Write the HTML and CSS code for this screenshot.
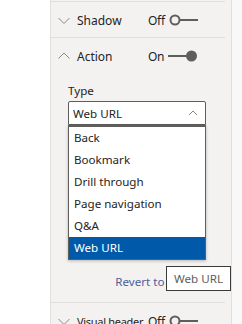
FILE: index.html
```html
<!DOCTYPE html>
<html>
	<head>
		<title>format pane</title>
		<meta charset="utf-8">
		<link rel="stylesheet" href="styles.css">
	</head>
	<body>
		<div class="page">
			<div class="gutter"></div>
			<div class="pane">
				<div class="card first">
					<div class="head">
						<svg class="chev" width="12" height="12" viewBox="0 0 12 12"><path d="M0.5 4 L6 9.5 L11.5 4" fill="none" stroke="#8a8886" stroke-width="1"/></svg>
						<span class="label">Shadow</span>
						<span class="state">Off</span>
						<svg class="toggle" width="32" height="14" viewBox="0 0 32 14"><circle cx="6" cy="7" r="4.5" fill="none" stroke="#605e5c" stroke-width="2"/><line x1="10.5" y1="7" x2="29" y2="7" stroke="#605e5c" stroke-width="2"/></svg>
					</div>
				</div>
				<div class="card">
					<div class="head">
						<svg class="chev" width="12" height="12" viewBox="0 0 12 12"><path d="M0.5 8.5 L6 3 L11.5 8.5" fill="none" stroke="#8a8886" stroke-width="1"/></svg>
						<span class="label">Action</span>
						<span class="state">On</span>
						<svg class="toggle on" width="32" height="14" viewBox="0 0 32 14"><line x1="0" y1="7" x2="20" y2="7" stroke="#605e5c" stroke-width="2"/><circle cx="23.5" cy="7" r="5.5" fill="#605e5c"/></svg>
					</div>
					<div class="body">
						<div class="field">Type</div>
						<div class="select">
							<span>Web URL</span>
							<svg width="10" height="6" viewBox="0 0 10 6"><path d="M1 5 L5 1 L9 5" fill="none" stroke="#8a8886" stroke-width="1"/></svg>
						</div>
						<ul class="list">
							<li>Back</li>
							<li>Bookmark</li>
							<li>Drill through</li>
							<li>Page navigation</li>
							<li>Q&amp;A</li>
							<li class="picked">Web URL</li>
						</ul>
						<div class="revert">Revert to default</div>
					</div>
				</div>
				<div class="card">
					<div class="head">
						<svg class="chev" width="12" height="12" viewBox="0 0 12 12"><path d="M0.5 4 L6 9.5 L11.5 4" fill="none" stroke="#8a8886" stroke-width="1"/></svg>
						<span class="label tight">Visual header</span>
						<span class="state">Off</span>
						<svg class="toggle" width="32" height="14" viewBox="0 0 32 14"><circle cx="6" cy="7" r="4.5" fill="none" stroke="#605e5c" stroke-width="2"/><line x1="10.5" y1="7" x2="29" y2="7" stroke="#605e5c" stroke-width="2"/></svg>
					</div>
				</div>
			</div>
			<div class="edge"></div>
		</div>
		<div class="tip">Web URL</div>
	</body>
</html>
```

FILE: styles.css
```css
* {box-sizing: border-box;}
body {margin: 0; background: #fff; font-family: 'Noto Sans', 'Open Sans', sans-serif;
	font-size: 11.6px; color: #252423; height: 324px; overflow: hidden;}
.page {display: flex; height: 324px;}
.gutter {width: 50px; background: #fff;}
.pane {width: 182px; background: #f3f2f1; border-left: 1px solid #e1dfdd;
	border-right: 1px solid #e1dfdd; padding-top: 1px;}
.edge {flex: 1; background: #f8f8f8;}

.card {width: 174px; border-bottom: 1px solid #e1dfdd;}
.card.first {border-top: 1px solid #e1dfdd;}
.head {display: flex; align-items: center; height: 35px; padding-left: 7px; padding-top: 1px;}
.chev {flex: none; margin-right: 7px;}
.label {width: 71px; white-space: nowrap; font-size: 12px; color: #252423;}
.label.tight {font-size: 11px; letter-spacing: -.3px;}
.state {width: 20px; color: #252423; font-size: 12px; letter-spacing: -.3px;}
.toggle {margin-left: 1px;}
.toggle.on {margin-left: 0;}

.body {padding: 10px 19px 12px 17px;}
.field {line-height: 16px;}
.select {margin-top: 2px; height: 24px; background: #fff; border: 1px solid #605e5c;
	border-radius: 2px 2px 0 0; display: flex; align-items: center;
	justify-content: space-between; padding: 0 7px 0 4px;}
.list {list-style: none; margin: 0; padding: 0; background: #fff;
	border: 1px solid #605e5c; border-top-width: 2px;
	box-shadow: 0 1px 3px rgba(0,0,0,.25);}
.list li {height: 22px; line-height: 22px; padding-left: 5px; white-space: nowrap;}
.list li.picked {background: #005aa9; color: #fff;}
.revert {margin-top: 14px; text-align: right; line-height: 16px; color: #4a5f9c;}

.tip {position: absolute; left: 166px; top: 266px; width: 65px; height: 25px;
	background: #fff; border: 1px solid #3b3a39; color: #605e5c;
	padding-left: 7px; line-height: 23px; white-space: nowrap;}
```
